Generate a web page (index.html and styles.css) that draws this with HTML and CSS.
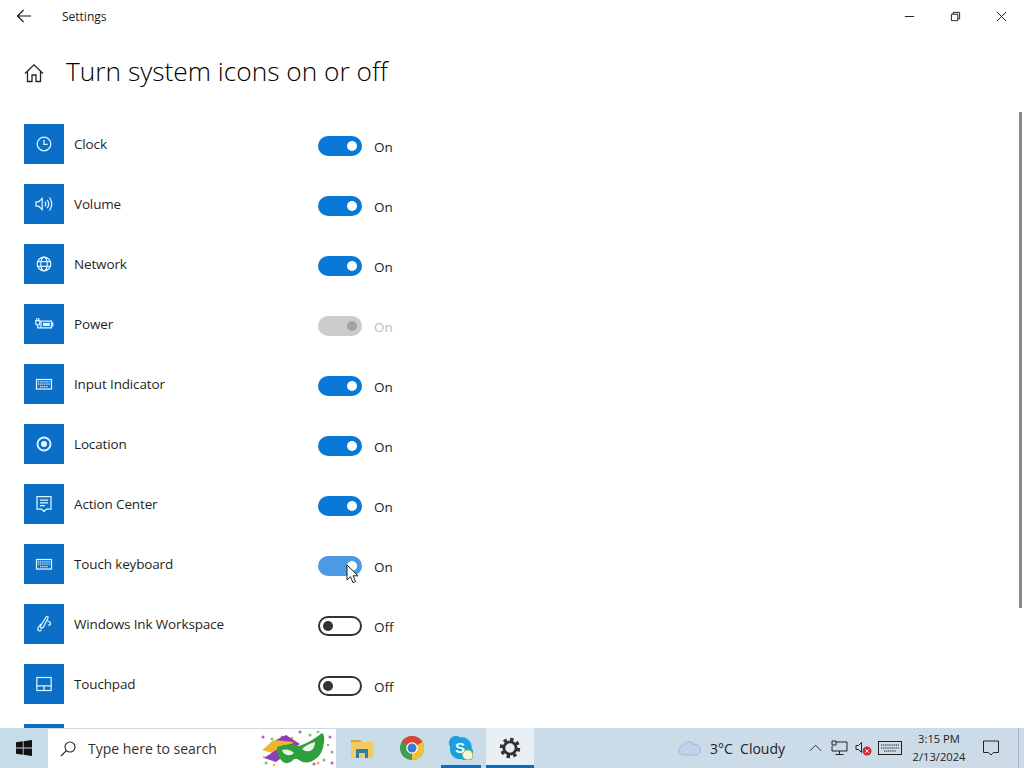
FILE: index.html
```html
<!DOCTYPE html>
<html lang="en">
<head>
<meta charset="utf-8">
<title>Settings</title>
<link rel="stylesheet" href="styles.css">
</head>
<body>
<svg class="defs" aria-hidden="true">
  <symbol id="i-clock" viewBox="0 0 20 20"><circle cx="10" cy="10" r="6.800"/><path d="M10 5.800v4.600h3.600"/></symbol>
  <symbol id="i-volume" viewBox="0 0 20 20"><path d="M2 7.800h2.600l3.600-3.400v11.200l-3.600-3.400H2z"/><path d="M11 7.600q1.600 2.400 0 4.800M13.200 5.800q3 4.200 0 8.400M15.500 3.500q4.500 6.500 0 13"/></symbol>
  <symbol id="i-globe" viewBox="0 0 20 20"><circle cx="10" cy="10" r="6.800"/><ellipse cx="10" cy="10" rx="3.200" ry="6.800"/><path d="M3.500 7.700h13M3.500 12.300h13"/></symbol>
  <symbol id="i-power" viewBox="0 0 20 20"><path d="M7 7h10.500v6.800H7z"/><path d="M9 8.800h6.800v3.300H9z" class="fill"/><path d="M17.500 9h1.300v2.800h-1.300M1.800 6.500h4v2.500q0 2-2 2t-2-2zM2.800 4v2.500M4.800 4v2.500M3.800 11v2.800h3"/></symbol>
  <symbol id="i-keyboard" viewBox="0 0 20 20"><rect x="2.500" y="5.500" width="15" height="9.500"/><path d="M4 7.900h12M4 10.200h12M6 12.600h8" class="keys"/></symbol>
  <symbol id="i-location" viewBox="0 0 20 20"><circle cx="10" cy="10" r="6.500" class="thick"/><circle cx="10" cy="10" r="3" class="fill"/></symbol>
  <symbol id="i-action" viewBox="0 0 20 20"><path d="M3 2.500h14v12.500h-4.500L10 17.500 7.500 15H3z"/><path d="M6 6h8M6 8.800h8M6 11.500h5"/></symbol>
  <symbol id="i-ink" viewBox="0 0 20 20"><path d="M12.500 2.500q2-.5 1.500 1.500l-4.500 9q-1.500 1.800-2.500 1t-.2-2.500zM13.500 7q3 .5 3 2.500t-2.500 1.500M7 10l-2.500 3q-1.500 2.500 0 3.500t3-1"/></symbol>
  <symbol id="i-touchpad" viewBox="0 0 20 20"><rect x="2.800" y="3.500" width="14.400" height="13"/><path d="M2.800 11.800h14.400M10 11.800v4.700"/></symbol>
</svg>

<div class="titlebar">
  <div class="title-left">
    <svg class="back" viewBox="0 0 16 16"><path d="M15 8H1.500M7.500 2 1.500 8l6 6"/></svg>
    <span class="app-name">Settings</span>
  </div>
  <div class="controls">
    <span class="ctl"><svg viewBox="0 0 12 12"><path d="M1 6h10"/></svg></span>
    <span class="ctl"><svg viewBox="0 0 12 12"><path d="M1.500 3.500h7v7h-7zM3.500 3.500v-2h7v7h-2"/></svg></span>
    <span class="ctl"><svg viewBox="0 0 12 12"><path d="M1 1l10 10M11 1 1 11"/></svg></span>
  </div>
</div>

<main class="main">
  <header class="page-head">
    <svg class="home" viewBox="0 0 20 20"><path d="M1 10.500 10 1.800l9 8.700M3.500 8.500v10h4.500v-6.500h4v6.500h4.500v-10"/></svg>
    <h1 class="page-title">Turn system icons on or off</h1>
  </header>

  <div class="list">
    <div class="row"><div class="tile"><svg class="glyph"><use href="#i-clock"/></svg></div><span class="label">Clock</span><div class="switch"><span class="track on"><span class="knob"></span></span><span class="state">On</span></div></div>
    <div class="row"><div class="tile"><svg class="glyph"><use href="#i-volume"/></svg></div><span class="label">Volume</span><div class="switch"><span class="track on"><span class="knob"></span></span><span class="state">On</span></div></div>
    <div class="row"><div class="tile"><svg class="glyph"><use href="#i-globe"/></svg></div><span class="label">Network</span><div class="switch"><span class="track on"><span class="knob"></span></span><span class="state">On</span></div></div>
    <div class="row"><div class="tile"><svg class="glyph"><use href="#i-power"/></svg></div><span class="label">Power</span><div class="switch"><span class="track disabled"><span class="knob"></span></span><span class="state muted">On</span></div></div>
    <div class="row"><div class="tile"><svg class="glyph"><use href="#i-keyboard"/></svg></div><span class="label">Input Indicator</span><div class="switch"><span class="track on"><span class="knob"></span></span><span class="state">On</span></div></div>
    <div class="row"><div class="tile"><svg class="glyph"><use href="#i-location"/></svg></div><span class="label">Location</span><div class="switch"><span class="track on"><span class="knob"></span></span><span class="state">On</span></div></div>
    <div class="row"><div class="tile"><svg class="glyph"><use href="#i-action"/></svg></div><span class="label">Action Center</span><div class="switch"><span class="track on"><span class="knob"></span></span><span class="state">On</span></div></div>
    <div class="row"><div class="tile"><svg class="glyph"><use href="#i-keyboard"/></svg></div><span class="label">Touch keyboard</span><div class="switch"><span class="track hover"><span class="knob"></span><svg class="cursor" viewBox="0 0 12 20"><path d="M1 1v15l3.500-3.300 2.500 6 2.600-1.100-2.500-5.800H12z"/></svg></span><span class="state">On</span></div></div>
    <div class="row"><div class="tile"><svg class="glyph"><use href="#i-ink"/></svg></div><span class="label">Windows Ink Workspace</span><div class="switch"><span class="track off"><span class="knob"></span></span><span class="state">Off</span></div></div>
    <div class="row"><div class="tile"><svg class="glyph"><use href="#i-touchpad"/></svg></div><span class="label">Touchpad</span><div class="switch"><span class="track off"><span class="knob"></span></span><span class="state">Off</span></div></div>
    <div class="row"><div class="tile"></div></div>
  </div>
  <div class="scrollbar"></div>
</main>

<footer class="taskbar">
  <div class="start"><svg viewBox="0 0 16 16"><path d="M0 2.300 6.800 1.300v6.300H0zM7.600 1.200 16 0v7.600H7.600zM0 8.400h6.800v6.300L0 13.700zM7.600 8.400H16V16l-8.400-1.200z"/></svg></div>
  <div class="search">
    <svg class="lens" viewBox="0 0 16 16"><circle cx="10" cy="6" r="5"/><path d="M6.300 9.700 1 15"/></svg>
    <span class="search-text">Type here to search</span>
    <svg class="mask" viewBox="0 0 78 38">
      <g fill="#b55fc4"><circle cx="5" cy="8" r="1.500"/><circle cx="42" cy="3" r="1.500"/><circle cx="72" cy="8" r="1.500"/><circle cx="74" cy="34" r="1.500"/><circle cx="56" cy="35" r="1.500"/><circle cx="24" cy="8" r="1.300"/></g>
      <g fill="#7cc46a"><circle cx="14" cy="10" r="1.500"/><circle cx="52" cy="6" r="1.500"/><circle cx="60" cy="3" r="1.300"/><circle cx="8" cy="34" r="1.500"/><circle cx="66" cy="31" r="1.500"/><circle cx="74" cy="23" r="1.500"/><circle cx="70" cy="16" r="1.300"/></g>
      <g fill="#e6bd3c"><circle cx="34" cy="9" r="1.500"/><circle cx="16" cy="36" r="1.300"/><circle cx="60" cy="34" r="1.500"/><circle cx="6" cy="28" r="1.300"/></g>
      <path d="M12 14 28 6l14 9-14 9z" fill="#8a3fb5"/>
      <path d="M4 21 16 11l20 2-18 12z" fill="#eeb52e"/>
      <path d="M6 29 18 21l12 3-12 9z" fill="#8a3fb5"/>
      <path d="M19 18q12-5 22-1 12-4 23-13 3 2 2 9-1 13-10 18-8 5-15 0-4-3-7 1-7 5-11-1-5-6-4-13z" fill="#2f9e3c"/>
      <path d="M24 21q7-2 12 3-3 3-7 2-4-1-5-5zM44 20q5-5 13-7 0 7-5 9-5 1-8-2z" fill="#e9f4e6"/>
    </svg>
  </div>
  <div class="apps">
    <span class="app"><svg viewBox="0 0 24 24"><path d="M1 4h9l2 2H1z" fill="#d9a53c"/><path d="M1 6h22v14a2 2 0 0 1-2 2H3a2 2 0 0 1-2-2z" fill="#f4c964"/><path d="M6 13h12v9h-3v-5H9v5H6z" fill="#2f7ca8"/></svg></span>
    <span class="app"><svg viewBox="0 0 24 24"><circle cx="12" cy="12" r="12" fill="#3f9e4c"/><path d="M12 12 1.600 6A12 12 0 0 1 22.400 6z" fill="#dc4437"/><path d="M12 12 22.400 6A12 12 0 0 1 12 24z" fill="#f2c230"/><circle cx="12" cy="12" r="5.800" fill="#fff"/><circle cx="12" cy="12" r="4.500" fill="#3a78d8"/></svg></span>
    <span class="app app-open"><svg viewBox="0 0 24 24"><path d="M7 0a7 7 0 0 1 4 1.200 10 10 0 0 1 11.500 11.300A7 7 0 0 1 13 23 10 10 0 0 1 1.200 11 7 7 0 0 1 7 0z" fill="#1a9fe0"/><text x="11" y="17" class="skype-s">S</text><path d="M13 18q3-5 7-4t4 7q-1 3-5 3-5 0-6-6z" fill="#f4f6d8" stroke="#8fb84a"/></svg></span>
    <span class="app app-active"><svg viewBox="0 0 20 20"><circle cx="10" cy="10" r="7.800" class="gear-teeth"/><circle cx="10" cy="10" r="5.600" class="gear-ring"/></svg></span>
  </div>
  <div class="spacer"></div>
  <div class="weather">
    <svg class="cloud" viewBox="0 0 26 16"><path d="M6 15a4.500 4.500 0 0 1-1-8.800A7 7 0 0 1 17 4.500 5.500 5.500 0 0 1 20 15z" fill="#bfd3ea" stroke="#9db9dc"/></svg>
    <span class="weather-text">3°C&nbsp; Cloudy</span>
  </div>
  <div class="tray">
    <svg class="t-chev" viewBox="0 0 14 8"><path d="M1 7l6-6 6 6"/></svg>
    <svg class="t-net" viewBox="0 0 17 16"><path d="M5 2h11v9H1V6M8.500 11v3M4.500 14.500h8"/><path d="M1 1h4v4H1z"/></svg>
    <svg class="t-vol" viewBox="0 0 17 16"><path d="M1 5.500h2.500l3-3v10l-3-3H1z"/><circle cx="12" cy="11" r="4.500" class="t-err"/><path d="M10.300 9.300l3.400 3.400M13.700 9.300l-3.400 3.400" class="t-x"/></svg>
    <svg class="t-kbd" viewBox="0 0 24 14"><rect x=".5" y=".5" width="23" height="13"/><path d="M3 4h18M3 7h18M6 10h12" class="keys"/></svg>
  </div>
  <div class="clock"><span>3:15 PM</span><span>2/13/2024</span></div>
  <div class="notify"><svg viewBox="0 0 16 16"><path d="M.500 1h15v11.500h-5L8 15l-2.500-2.500h-5z"/></svg></div>
  <div class="desktop"></div>
</footer>
</body>
</html>
```
FILE: styles.css
```css
* { box-sizing: border-box; }
html, body { margin: 0; height: 768px; overflow: hidden; background: #fff; }
body {
  display: flex;
  flex-direction: column;
  font-family: "Open Sans", "Noto Sans", "Liberation Sans", sans-serif;
  color: #1a1a1a;
}
.defs { width: 0; height: 0; display: block; position: absolute; }

/* Title bar */
.titlebar { height: 32px; flex: none; display: flex; justify-content: space-between; }
.title-left { display: flex; align-items: center; padding-left: 16px; }
.back { width: 16px; height: 16px; fill: none; stroke: #111; stroke-width: 1.100; }
.app-name { margin-left: 30px; font-size: 12px; color: #222; }
.controls { display: flex; }
.ctl { width: 46px; display: flex; align-items: center; justify-content: center; }
.ctl svg { width: 11px; height: 11px; fill: none; stroke: #111; stroke-width: 1; }

/* Main */
.main { height: 696px; flex: none; overflow: hidden; position: relative; }
.page-head { height: 92px; padding: 19px 0 0 24px; display: flex; align-items: flex-start; }
.home { width: 20px; height: 20px; margin-top: 12px; fill: none; stroke: #222; stroke-width: 1.300; }
.page-title { margin: 0 0 0 22px; font-size: 26.300px; line-height: 40px; font-weight: 300; color: #000; }

.list { padding-left: 24px; }
.row { height: 60px; display: flex; align-items: flex-start; }
.tile { width: 40px; height: 40px; flex: none; background: #0b6fc8; display: flex; align-items: center; justify-content: center; }
.glyph { width: 20px; height: 20px; fill: none; stroke: #dcf5ff; stroke-width: 1.250; }
.fill { fill: #dcf5ff; stroke: none; }
.thick { stroke-width: 1.900; }
.keys { stroke-dasharray: 1.300 .8; }
.label { width: 254px; flex: none; padding-left: 10px; font-size: 13.500px; letter-spacing: -.15px; line-height: 40px; color: #1f1f1f; }
.switch { display: flex; align-items: center; height: 20px; margin-top: 12px; }
.track { width: 44px; height: 20px; border-radius: 10px; display: flex; align-items: center; position: relative; flex: none; }
.knob { width: 10px; height: 10px; border-radius: 50%; background: #fff; }
.on { background: #0a78d6; justify-content: flex-end; padding-right: 5px; }
.hover { background: #4c9be2; justify-content: flex-end; padding-right: 5px; }
.disabled { background: #cccccc; justify-content: flex-end; padding-right: 5px; }
.disabled .knob { background: #a3a3a3; }
.off { border: 2px solid #333; padding-left: 3px; background: #fff; }
.off .knob { background: #333; }
.state { margin-left: 12px; font-size: 13.500px; line-height: 20px; padding-top: 2px; color: #1f1f1f; }
.muted { color: #bdbdbd; }
.cursor { position: absolute; left: 28px; top: 8px; width: 12px; height: 20px; fill: #fff; stroke: #222; stroke-width: 1; }
.scrollbar { position: absolute; top: 80px; right: 2px; width: 3px; height: 496px; background: #8a8a8a; }

/* Taskbar */
.taskbar {
  height: 40px;
  flex: none;
  display: flex;
  align-items: stretch;
  background: linear-gradient(90deg, #c4dde8 0%, #c9dce8 40%, #cddbe8 100%);
  position: relative;
}
.start { width: 48px; display: flex; align-items: center; justify-content: center; }
.start svg { width: 16px; height: 16px; fill: #111; }
.search { width: 288px; background: #fff; display: flex; align-items: center; padding-left: 12px; border-top: 1px solid #cfd8df; position: relative; }
.lens { width: 16px; height: 16px; fill: none; stroke: #222; stroke-width: 1.100; flex: none; }
.search-text { margin-left: 12px; font-size: 14px; color: #333; }
.mask { position: absolute; right: 0; top: 0; width: 78px; height: 38px; }
.apps { display: flex; margin-left: 2px; }
.app { width: 48px; margin-right: 2px; display: flex; align-items: center; justify-content: center; border-bottom: 3px solid transparent; padding-top: 3px; }
.app svg { width: 24px; height: 24px; }
.app-open { border-bottom-color: #0a6ebd; width: 40px; margin-left: 3px; margin-right: 5px; }
.app-active { background: #e8f0f5; border-bottom-color: #0a6ebd; }
.app-active svg { width: 22px; height: 22px; }
.skype-s { font: 700 15px "Liberation Sans", sans-serif; fill: #fff; text-anchor: middle; }
.gear-teeth { fill: none; stroke: #333; stroke-width: 3; stroke-dasharray: 3.100 3; }
.gear-ring { fill: none; stroke: #333; stroke-width: 2.600; }
.spacer { flex: 1; }
.weather { display: flex; align-items: center; }
.cloud { width: 26px; height: 16px; }
.weather-text { margin-left: 7px; font-size: 14px; color: #222; }
.tray { display: flex; align-items: center; margin-left: 24px; }
.tray svg { fill: none; stroke: #222; stroke-width: 1; }
.t-chev { width: 13px; height: 8px; }
.t-net { width: 17px; height: 16px; margin-left: 9px; }
.t-vol { width: 17px; height: 16px; margin-left: 7px; }
.tray .t-err { fill: #d92b2b; stroke: none; }
.t-x { stroke: #fff; }
.tray .t-x { stroke: #fff; }
.t-kbd { width: 24px; height: 14px; margin-left: 6px; }
.clock { width: 74px; display: flex; flex-direction: column; align-items: center; justify-content: center; font-size: 11.200px; line-height: 18px; color: #222; }
.notify { width: 28px; margin-left: 1px; display: flex; align-items: center; justify-content: center; }
.notify svg { width: 16px; height: 16px; fill: none; stroke: #222; stroke-width: 1; }
.desktop { width: 6px; margin-left: 13px; border-left: 1px solid #a9b8c4; }
```
